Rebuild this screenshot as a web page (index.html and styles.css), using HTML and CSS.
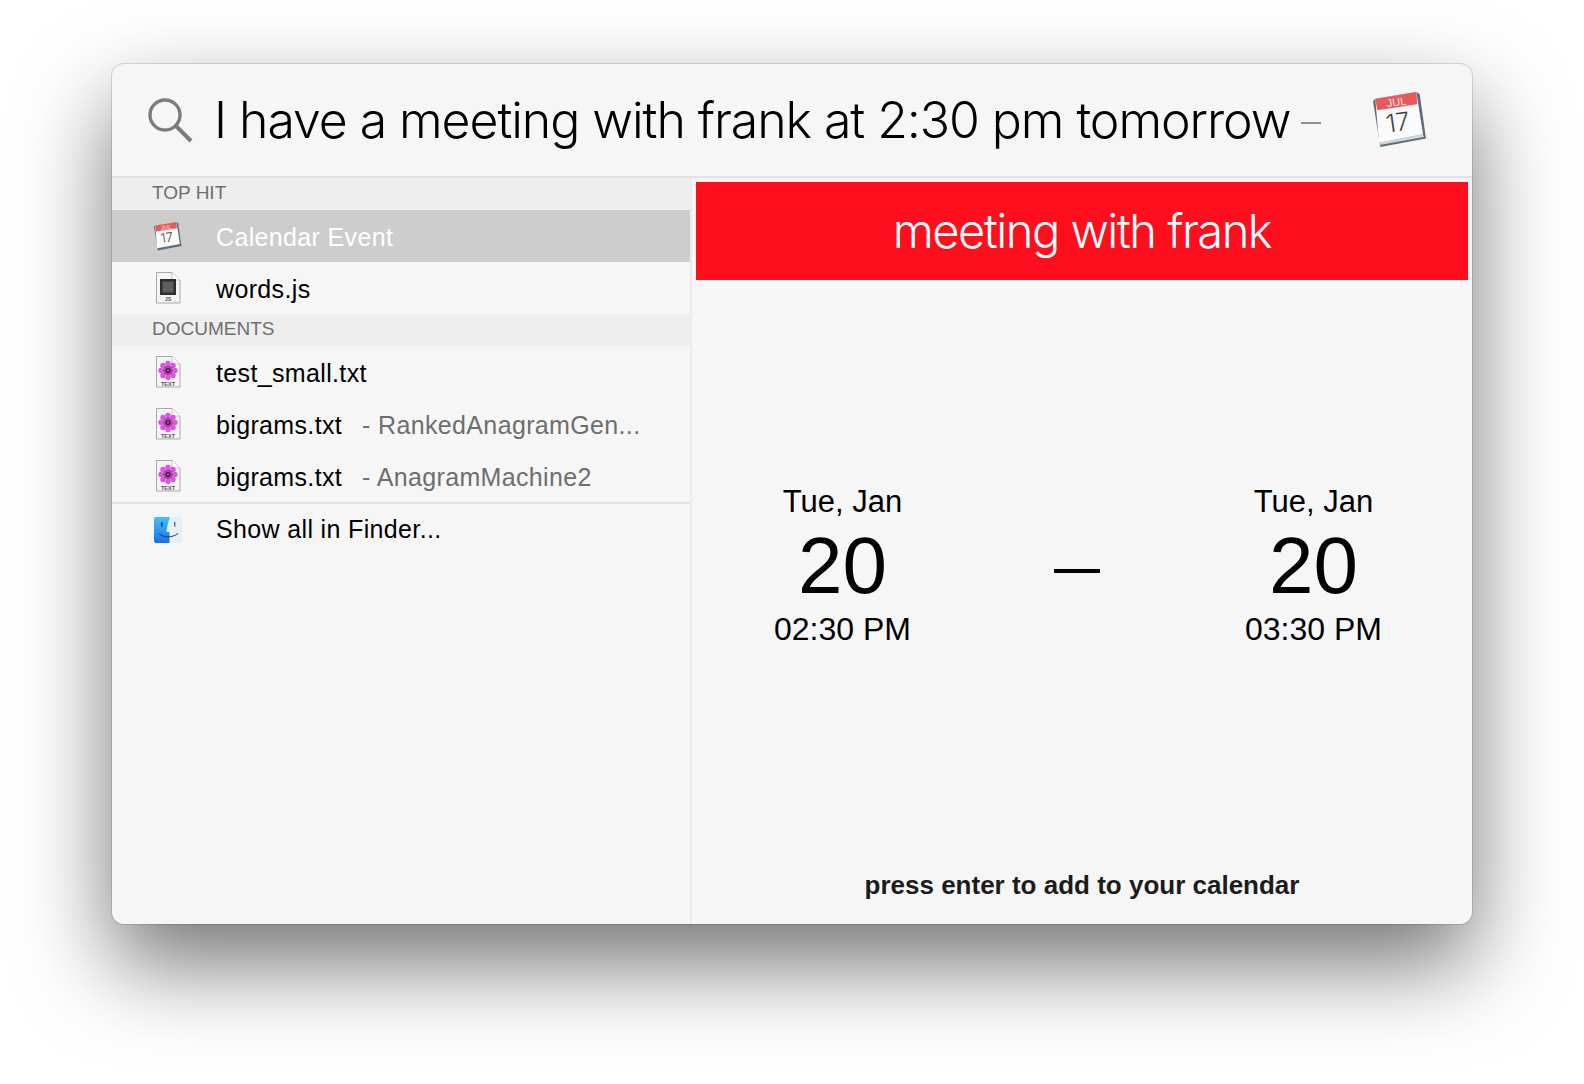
FILE: index.html
```html
<!DOCTYPE html>
<html lang="en">
<head>
  <meta charset="UTF-8" />
  <title>Spotlight</title>
  <link rel="stylesheet" href="styles.css">
</head>
<body>

<div class="window">
  <div class="search-bar">
    <svg class="search-icon" viewBox="0 0 46 46" width="46" height="46">
      <circle cx="18" cy="18" r="15" fill="none" stroke="#7c7c7c" stroke-width="3.4"/>
      <line x1="29" y1="29" x2="44" y2="44" stroke="#7c7c7c" stroke-width="4"/>
    </svg>
    <div class="query">I have a meeting with frank at 2:30 pm tomorrow</div>
    <div class="query-dash"></div>
    <svg class="query-app" viewBox="0 0 54 56" width="54" height="56">
      <polygon points="0,9 2.300,6.700 43.300,0 46.700,2 53,46.500 7.300,55" fill="#5c6f79"/>
      <polygon points="6,50.700 50,42.300 51,45 6.500,53" fill="#d4d6d7"/>
      <polygon points="2.300,6.700 43.300,0 50,42.300 6,50.700" fill="#fbfbfb"/>
      <polygon points="2.300,6.700 43.300,0 44.300,12.300 4.300,18.300" fill="#e65a5c"/>
      <text x="24" y="14" class="cal-month" transform="rotate(-8 24 14)" text-anchor="middle">JUL</text>
      <text x="26" y="39" class="cal-day" transform="rotate(-8 26 39)" text-anchor="middle">17</text>
    </svg>
  </div>

  <div class="content">
    <div class="results">
      <div class="section">TOP HIT</div>
      <div class="row selected">
        <svg class="row-icon" viewBox="0 0 54 56" width="28" height="29">
          <polygon points="0,9 2.300,6.700 43.300,0 46.700,2 53,46.500 7.300,55" fill="#5c6f79"/>
          <polygon points="2.300,6.700 43.300,0 50,42.300 6,50.700" fill="#fbfbfb"/>
          <polygon points="2.300,6.700 43.300,0 44.300,12.300 4.300,18.300" fill="#e65a5c"/>
          <text x="24" y="14" class="cal-month" transform="rotate(-8 24 14)" text-anchor="middle">JUL</text>
          <text x="26" y="39" class="cal-day" transform="rotate(-8 26 39)" text-anchor="middle">17</text>
        </svg>
        <span class="name">Calendar Event</span>
      </div>
      <div class="row">
        <svg class="row-icon" viewBox="0 0 26 32" width="26" height="32">
          <path d="M1.500 .5H17L25 8V31H1.500Z" fill="#f4f4f4" stroke="#a9a9a9"/>
          <path d="M17 .5V8H25" fill="#fff" stroke="#c4c4c4"/>
          <rect x="5" y="7" width="16" height="16" fill="#2e2e2e"/>
          <rect x="7.500" y="9.500" width="11" height="11" fill="#5e5e5e"/>
          <text x="13" y="29" class="file-label" text-anchor="middle">JS</text>
        </svg>
        <span class="name">words.js</span>
      </div>
      <div class="section">DOCUMENTS</div>
      <div class="row">
        <svg class="row-icon" viewBox="0 0 26 32" width="26" height="32">
          <path d="M1.500 .5H17L25 8V31H1.500Z" fill="#f4f4f4" stroke="#a9a9a9"/>
          <path d="M17 .5V8H25" fill="#fff" stroke="#c4c4c4"/>
          <g class="petals">
            <circle cx="13" cy="7.500" r="2.700"/><circle cx="18" cy="9.500" r="2.700"/><circle cx="20" cy="14.500" r="2.700"/>
            <circle cx="18" cy="19.500" r="2.700"/><circle cx="13" cy="21.500" r="2.700"/><circle cx="8" cy="19.500" r="2.700"/>
            <circle cx="6" cy="14.500" r="2.700"/><circle cx="8" cy="9.500" r="2.700"/>
          </g>
          <circle cx="13" cy="14.500" r="5" fill="#b53dbd"/>
          <circle cx="13" cy="14.500" r="2.600" fill="#3f2436"/>
          <circle cx="13" cy="14.500" r="0.900" fill="#d9933a"/>
          <text x="13" y="29.500" class="file-label" text-anchor="middle">TEXT</text>
        </svg>
        <span class="name">test_small.txt</span>
      </div>
      <div class="row">
        <svg class="row-icon" viewBox="0 0 26 32" width="26" height="32">
          <path d="M1.500 .5H17L25 8V31H1.500Z" fill="#f4f4f4" stroke="#a9a9a9"/>
          <path d="M17 .5V8H25" fill="#fff" stroke="#c4c4c4"/>
          <g class="petals">
            <circle cx="13" cy="7.500" r="2.700"/><circle cx="18" cy="9.500" r="2.700"/><circle cx="20" cy="14.500" r="2.700"/>
            <circle cx="18" cy="19.500" r="2.700"/><circle cx="13" cy="21.500" r="2.700"/><circle cx="8" cy="19.500" r="2.700"/>
            <circle cx="6" cy="14.500" r="2.700"/><circle cx="8" cy="9.500" r="2.700"/>
          </g>
          <circle cx="13" cy="14.500" r="5" fill="#b53dbd"/>
          <circle cx="13" cy="14.500" r="2.600" fill="#3f2436"/>
          <circle cx="13" cy="14.500" r="0.900" fill="#d9933a"/>
          <text x="13" y="29.500" class="file-label" text-anchor="middle">TEXT</text>
        </svg>
        <span class="name">bigrams.txt</span>
        <span class="path">- RankedAnagramGen...</span>
      </div>
      <div class="row">
        <svg class="row-icon" viewBox="0 0 26 32" width="26" height="32">
          <path d="M1.500 .5H17L25 8V31H1.500Z" fill="#f4f4f4" stroke="#a9a9a9"/>
          <path d="M17 .5V8H25" fill="#fff" stroke="#c4c4c4"/>
          <g class="petals">
            <circle cx="13" cy="7.500" r="2.700"/><circle cx="18" cy="9.500" r="2.700"/><circle cx="20" cy="14.500" r="2.700"/>
            <circle cx="18" cy="19.500" r="2.700"/><circle cx="13" cy="21.500" r="2.700"/><circle cx="8" cy="19.500" r="2.700"/>
            <circle cx="6" cy="14.500" r="2.700"/><circle cx="8" cy="9.500" r="2.700"/>
          </g>
          <circle cx="13" cy="14.500" r="5" fill="#b53dbd"/>
          <circle cx="13" cy="14.500" r="2.600" fill="#3f2436"/>
          <circle cx="13" cy="14.500" r="0.900" fill="#d9933a"/>
          <text x="13" y="29.500" class="file-label" text-anchor="middle">TEXT</text>
        </svg>
        <span class="name">bigrams.txt</span>
        <span class="path">- AnagramMachine2</span>
      </div>
      <div class="row show-all">
        <svg class="row-icon" viewBox="0 0 28 26" width="28" height="26">
          <defs>
            <linearGradient id="fleft" x1="0" y1="0" x2="0" y2="1"><stop offset="0" stop-color="#3fc3f5"/><stop offset="1" stop-color="#1a6fe8"/></linearGradient>
          </defs>
          <rect x="0" y="0" width="28" height="26" rx="2" fill="#e4eff6"/>
          <path d="M2 0H16C13.500 7 12.500 12 12.500 15H15.500V26H2A2 2 0 0 1 0 24V2A2 2 0 0 1 2 0Z" fill="url(#fleft)"/>
          <path d="M5 16.500C10 21 18 21 24 16.500" fill="none" stroke="#1d3b63" stroke-width="1"/>
          <rect x="7" y="5" width="1.400" height="4.500" fill="#12305a"/>
          <rect x="20" y="5" width="1.400" height="4.500" fill="#4a6a8a"/>
        </svg>
        <span class="name">Show all in Finder...</span>
      </div>
    </div>

    <div class="detail">
      <div class="event-title">meeting with frank</div>
      <div class="dates">
        <div class="date">
          <div class="date-day">Tue, Jan</div>
          <div class="date-num">20</div>
          <div class="date-time">02:30 PM</div>
        </div>
        <div class="date-dash"></div>
        <div class="date">
          <div class="date-day">Tue, Jan</div>
          <div class="date-num">20</div>
          <div class="date-time">03:30 PM</div>
        </div>
      </div>
      <div class="hint">press enter to add to your calendar</div>
    </div>
  </div>
</div>

</body>
</html>
```

FILE: styles.css
```css
body {
  margin: 0;
  padding: 64px 0 0 112px;
  height: 1084px;
  box-sizing: border-box;
  overflow: hidden;
  background-color: #fff;
  font-family: "Liberation Sans", Arial, sans-serif;
  color: #000;
}

.window {
  width: 1360px;
  height: 860px;
  box-sizing: border-box;
  display: flex;
  flex-direction: column;
  background-color: #f6f6f6;
  border-radius: 12px;
  box-shadow: 0 0 0 1px rgba(0,0,0,0.12), 0 40px 90px rgba(0,0,0,0.55);
}

.search-bar {
  height: 112px;
  flex: none;
  display: flex;
  align-items: center;
  padding-left: 35px;
  border-bottom: 2px solid #e2e2e2;
}

.search-icon {
  flex: none;
  margin-right: 21px;
}

.query {
  font-family: Inter, "Liberation Sans", sans-serif;
  font-weight: 300;
  font-size: 50px;
  letter-spacing: -1.07px;
  white-space: nowrap;
  color: #000;
}

.query-dash {
  width: 20px;
  height: 2px;
  margin: 6px 0 0 11px;
  background-color: #8f8f8f;
}

.query-app {
  margin-left: 52px;
  flex: none;
}

.content {
  flex: 1;
  display: flex;
  min-height: 0;
}

.results {
  width: 578px;
  flex: none;
}

.section {
  height: 32px;
  line-height: 30px;
  padding-left: 40px;
  font-size: 19px;
  color: #6f6f6f;
  background-color: #eeeeee;
}

.row {
  height: 52px;
  box-sizing: border-box;
  padding-top: 3px;
  display: flex;
  align-items: center;
  font-size: 25px;
  letter-spacing: 0.35px;
  white-space: nowrap;
}

.row-icon {
  flex: none;
  margin: -3px 0 0 42px;
  width: 28px;
}

.name {
  margin-left: 34px;
}

.path {
  margin-left: 20px;
  color: #6e6e6e;
}

.selected {
  background-color: #cdcdcd;
}

.selected .name {
  color: #fff;
}

.show-all {
  border-top: 2px solid #e2e2e2;
  height: 53px;
  padding-top: 0;
}

.show-all .row-icon {
  margin-top: 0;
}

.petals {
  fill: #dc55dc;
}

.cal-month {
  font-family: "Liberation Sans", sans-serif;
  font-size: 11px;
  fill: #fde4e4;
}

.cal-day {
  font-family: Inter, "Liberation Sans", sans-serif;
  font-weight: 300;
  font-size: 25px;
  fill: #444;
}

.file-label {
  font-family: "Liberation Sans", sans-serif;
  font-size: 5.500px;
  font-weight: bold;
  letter-spacing: 0;
  fill: #555;
}

.detail {
  flex: 1;
  display: flex;
  flex-direction: column;
  align-items: center;
  padding: 4px 4px 0 4px;
  border-left: 2px solid #ececec;
}

.event-title {
  align-self: stretch;
  height: 98px;
  line-height: 98px;
  flex: none;
  text-align: center;
  font-family: Inter, "Liberation Sans", sans-serif;
  font-weight: 300;
  font-size: 47px;
  letter-spacing: -1.5px;
  color: #fff;
  background-color: #ff0f1e;
}

.dates {
  align-self: stretch;
  display: flex;
  justify-content: space-between;
  align-items: center;
  padding: 203px 86px 0 78px;
}

.date {
  width: 137px;
  text-align: center;
  white-space: nowrap;
}

.date-day {
  font-size: 31px;
  line-height: 38px;
}

.date-num {
  font-size: 80px;
  line-height: 89px;
}

.date-time {
  font-size: 32px;
  line-height: 38px;
}

.date-dash {
  width: 46px;
  height: 4px;
  margin: 10px 0 0 -2px;
  background-color: #000;
}

.hint {
  margin-top: auto;
  margin-bottom: 23px;
  font-size: 26px;
  font-weight: bold;
  color: #1c1c1c;
}
```
